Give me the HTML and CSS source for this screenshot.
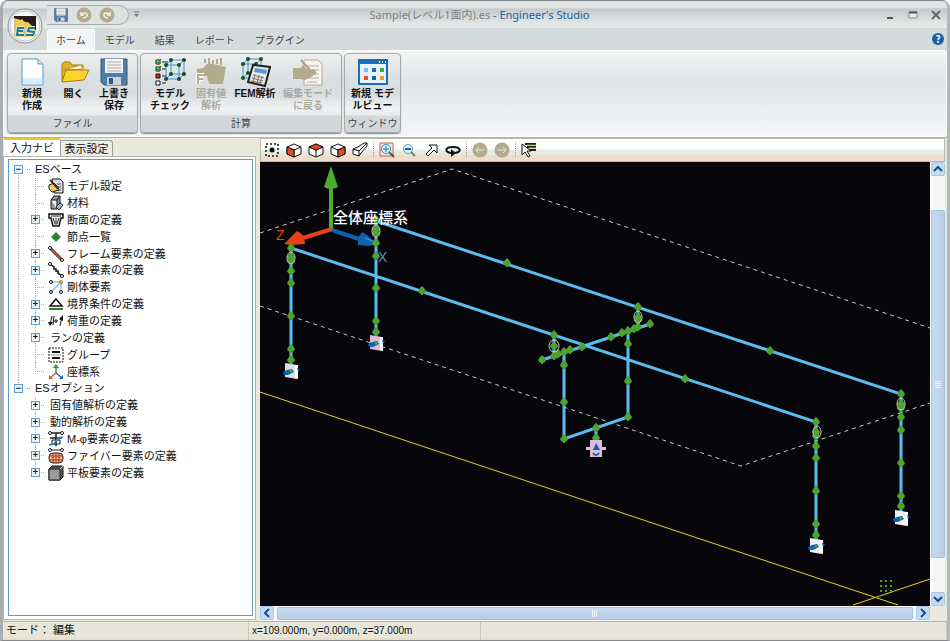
FILE: index.html
```html
<!DOCTYPE html>
<html lang="ja">
<head>
<meta charset="utf-8">
<title>Engineer's Studio</title>
<link rel="stylesheet" href="styles.css">
</head>
<body>
<div class="window">
  <header class="top">
    <button class="orb" aria-label="メニュー"><svg width="36" height="36" viewBox="0 0 36 36"><circle cx="18" cy="18" r="17" fill="#e9ebec" stroke="#8d9294"/><circle cx="18" cy="18" r="15" fill="#f8f8f8" stroke="#c5c9cb"/><path d="M7 8h22v21H7z" fill="#261b1a"/><path d="M7 10c5 2 14 2 22 13v6H7z" fill="#d5c093"/><path d="M9 11l4 2 2-2 3 4 3-1 6 6-7-2-7 2-4-3z" fill="#f0cf48"/><g fill="none" stroke="#f4e68c" stroke-width="4"><path d="M17 20h-6l-1 7h7M11 23h5M28 20h-6l-1 3 6 1-1 3h-7"/></g><g fill="none" stroke="#1777b4" stroke-width="2"><path d="M17 20h-6l-1 7h7M11 23h5M28 20h-6l-1 3 6 1-1 3h-7"/></g></svg></button>
    <div class="titlebar">
      <div class="quick">
        <button aria-label="保存"><svg width="16" height="16" viewBox="0 0 32 32"><use href="#disk"/></svg></button>
        <button aria-label="元に戻す"><svg width="16" height="16"><circle cx="8" cy="8" r="7.500" fill="#b3ab8e"/><path d="M5 5v3h3M5 8c4-4 7-1 6 1s-3 2-4 2" fill="none" stroke="#f4f2e8" stroke-width="1.500"/></svg></button>
        <button aria-label="やり直す"><svg width="16" height="16"><circle cx="8" cy="8" r="7.500" fill="#b3ab8e"/><path d="M11 5v3H8M11 8c-4-4-7-1-6 1s3 2 4 2" fill="none" stroke="#f4f2e8" stroke-width="1.500"/></svg></button>
      </div>
      <button class="more" aria-label="カスタマイズ"><svg width="7" height="7"><path d="M1 1h5" stroke="#777"/><path d="M1 3h5L3.500 6z" fill="#777"/></svg></button>
      <h1>Sample(レベル1面内).es <span>- Engineer's Studio</span></h1>
      <div class="winbtns">
        <button aria-label="最小化"><svg width="10" height="10"><path d="M2 8h6" stroke="#555" stroke-width="2"/></svg></button>
        <button aria-label="最大化"><svg width="10" height="10"><path d="M1 2h8v6H1z" fill="#eee" stroke="#888"/><path d="M1 2.500h8" stroke="#555" stroke-width="2"/></svg></button>
        <button aria-label="閉じる"><svg width="10" height="10"><path d="M1 1l8 8M9 1L1 9" stroke="#666" stroke-width="2"/></svg></button>
      </div>
    </div>
    <nav class="tabs">
      <button class="on">ホーム</button><button>モデル</button><button>結果</button><button>レポート</button><button>プラグイン</button>
      <button class="help" aria-label="ヘルプ">?</button>
    </nav>
  </header>

  <section class="ribbon">
    <div class="group file">
      <div class="cmds">
        <button><svg width="32" height="32"><path d="M6 3h16l5 5v21H6z" fill="#fff" stroke="#4c9bd0"/><path d="M7 22h19v6H7z" fill="#d8edfa"/><path d="M22 3v5h5" fill="#cfe5f5" stroke="#4c9bd0"/></svg>新規<br>作成</button>
        <button><svg width="32" height="32"><path d="M4 25V8l2-2h6l2 3h11v4" fill="#e2b12a" stroke="#a77a10"/><path d="M5 14l18-5 2 4z" fill="#fffbe6" stroke="#b99c35"/><path d="M4 26l4-12h23l-5 10z" fill="#ffd42a" stroke="#a77a10"/></svg>開く</button>
        <button><svg width="32" height="32"><use href="#disk"/></svg>上書き<br>保存</button>
      </div>
      <h2>ファイル</h2>
    </div>
    <div class="group calc">
      <div class="cmds">
        <button><svg width="32" height="32"><g fill="#fff" stroke="#111"><path d="M2 4h4v4H2zM2 11h4v4H2zM2 25h4v4H2z"/><path d="M2 18h4v4H2z" fill="#e0301a"/></g><path d="M2 5l2 2 3-4M2 12l2 2 3-4" stroke="#2c9135" fill="none" stroke-width="1.500"/><path d="M8 6h6M8 13h4M8 20h5M8 27h4" stroke="#222"/><use href="#cube"/></svg>モデル<br>チェック</button>
        <button disabled><svg width="32" height="32"><path d="M2 13l6-1 4-4h6l13 3-3 17H14l-2-8H2z" fill="#b3ab8e"/><path d="M10 7V3M14 8V2M18 8V4M22 8V3M26 9V2" stroke="#b3ab8e" stroke-width="2"/><path d="M3 28v-9h6M3 23h5" stroke="#fff" stroke-width="4" fill="none"/><path d="M3 28v-9h6M3 23h5" stroke="#b3ab8e" stroke-width="2" fill="none"/></svg>固有値<br>解析</button>
        <button><svg width="32" height="32"><use href="#cube" x="-8" y="-1"/><path d="M14 9l17 2-5 19-17-4z" fill="#e8e8e8" stroke="#222" stroke-width="2"/><path d="M16 12l12 2-1 4-12-2z" fill="#5b99d4"/><path d="M14 19l11 3M13 22l11 3M12 25l11 2M16 18l-2 8M20 19l-2 8M23 20l-2 8" stroke="#777" stroke-width="1"/></svg>FEM解析</button>
        <button disabled><svg width="32" height="32"><path d="M12 4h14l4 4v21H12z" fill="#f7f6f0" stroke="#b3ab8e"/><path d="M15 10h12M15 14h12M15 18h12M15 22h12M15 26h10" stroke="#b3ab8e"/><path d="M1 12h8l2-3 5 5 6-1 3 4-6 4-6 3-4-1H1z" fill="#b3ab8e"/><path d="M9 4l9 10" stroke="#aaa285" stroke-width="2"/></svg>編集モード<br>に戻る</button>
      </div>
      <h2>計算</h2>
    </div>
    <div class="group view">
      <div class="cmds">
        <button><svg width="32" height="32"><path d="M2 4h28v24H2z" fill="#e7f3fc" stroke="#176eb8" stroke-width="2"/><path d="M2 4h28v4H2z" fill="#176eb8"/><path d="M22 6h1M25 6h1M28 6h1" stroke="#fff" stroke-width="2"/><path d="M7 12h4v4H7z" fill="#7bb9e8"/><path d="M15 12h4v4h-4z" fill="#1974b8"/><path d="M23 12h4v4h-4z" fill="#55a535"/><path d="M7 20h4v4H7z" fill="#e4502b"/><path d="M15 20h4v4h-4z" fill="#185f9c"/><path d="M23 20h4v4h-4z" fill="#e7a130"/></svg>新規 モデ<br>ルビュー</button>
      </div>
      <h2>ウィンドウ</h2>
    </div>
  </section>

  <main>
    <aside>
      <div class="sidetabs"><button class="on">入力ナビ</button><button>表示設定</button></div>
      <div class="panel"><div class="treebox">
        <ul class="tree">
          <li><span class="rail first"><button aria-label="閉じる">−</button></span><span class="stub"></span>ESベース</li>
          <li><span class="rail"></span><span class="branch"></span><svg class="ic" viewBox="0 0 16 16"><path d="M4 1h8l3 3v11H6z" fill="#ddd" stroke="#111"/><path d="M9 6h4M9 9h4M9 12h4" stroke="#555"/><path d="M1 7l5-2 4 4 1 3-7 2-3-3z" fill="#f0c860" stroke="#222"/><path d="M2 2l8 9" stroke="#222" stroke-width="1.500"/></svg>モデル設定</li>
          <li><span class="rail"></span><span class="branch"></span><svg class="ic" viewBox="0 0 16 16"><path d="M3 5l3-4h6v8l-3 5H3z" fill="#999" stroke="#111"/><path d="M3 5h6v9M9 5l3-4" fill="#eee" stroke="#111"/><path d="M8 12l4-4 3 2-4 5z" fill="#93bae2" stroke="#222"/></svg>材料</li>
          <li><span class="rail"></span><span class="branch"><button aria-label="開く">+</button></span><svg class="ic" viewBox="0 0 16 16"><path d="M1 2h14v4h-2l-2 8H5L3 6H1z" fill="#fff" stroke="#111" stroke-width="1.500"/><path d="M3 4h10M5 6l2 6h2l2-6M8 6v5" stroke="#222" fill="none"/></svg>断面の定義</li>
          <li><span class="rail"></span><span class="branch"></span><svg class="ic" viewBox="0 0 16 16"><path d="M8 3l5 5-5 5-5-5z" fill="#35812f"/></svg>節点一覧</li>
          <li><span class="rail"></span><span class="branch"><button aria-label="開く">+</button></span><svg class="ic" viewBox="0 0 16 16"><path d="M2 2l12 12" stroke="#222" stroke-width="3"/><path d="M3 3l10 10" stroke="#e55a2b" stroke-width="1.500"/><circle cx="2" cy="2" r="1.500" fill="#fff" stroke="#111"/><circle cx="14" cy="14" r="1.500" fill="#fff" stroke="#111"/></svg>フレーム要素の定義</li>
          <li><span class="rail"></span><span class="branch"><button aria-label="開く">+</button></span><svg class="ic" viewBox="0 0 16 16"><path d="M2 2l4 3 0 2 2 0 0 2 2 0 0 2 4 3" stroke="#111" stroke-width="1.500" fill="none"/><circle cx="2" cy="2" r="1.500" fill="#fff" stroke="#111"/><circle cx="14" cy="14" r="1.500" fill="#fff" stroke="#111"/></svg>ばね要素の定義</li>
          <li><span class="rail"></span><span class="branch"></span><svg class="ic" viewBox="0 0 16 16"><path d="M3 13L13 3M13 3H3M13 3v10" stroke="#8fc3ee" stroke-width="1.500"/><g fill="#fff" stroke="#111"><circle cx="3" cy="3" r="1.500"/><circle cx="3" cy="13" r="1.500"/><circle cx="13" cy="13" r="1.500"/></g><circle cx="13" cy="3" r="1.500" fill="#f2c72c" stroke="#a58213"/></svg>剛体要素</li>
          <li><span class="rail"></span><span class="branch"><button aria-label="開く">+</button></span><svg class="ic" viewBox="0 0 16 16"><path d="M8 3l6 7H2z" fill="#fff" stroke="#111" stroke-width="1.500"/><path d="M1 13h14" stroke="#327a30" stroke-width="2"/></svg>境界条件の定義</li>
          <li><span class="rail"></span><span class="branch"><button aria-label="開く">+</button></span><svg class="ic" viewBox="0 0 16 16"><path d="M4 3L2 12M12 13l2-9M6 8h4M8 6v4M6 3L5 12" stroke="#111"/><path d="M0 9l2 4 3-4zM11 6l4-4v6z" fill="#111"/></svg>荷重の定義</li>
          <li><span class="rail"></span><span class="branch"><button aria-label="開く">+</button></span>ランの定義</li>
          <li><span class="rail"></span><span class="branch"></span><svg class="ic" viewBox="0 0 16 16"><path d="M1 1h14v14H1z" fill="none" stroke="#111" stroke-dasharray="2 1"/><path d="M4 5h8M4 11h8" stroke="#111" stroke-width="2"/><path d="M3 8h10" stroke="#888"/></svg>グループ</li>
          <li><span class="rail"></span><span class="branch last"></span><svg class="ic" viewBox="0 0 16 16"><path d="M8 9V2" stroke="#379533" stroke-width="1.500"/><path d="M5 4l3-4 3 4z" fill="#379533"/><path d="M8 9l-5 4" stroke="#e34a22" stroke-width="1.500"/><path d="M1 11v4h4z" fill="#e34a22"/><path d="M8 9l5 4" stroke="#1d69ac" stroke-width="1.500"/><path d="M15 11v4h-4z" fill="#1d69ac"/></svg>座標系</li>
          <li><span class="rail last"><button aria-label="閉じる">−</button></span><span class="stub"></span>ESオプション</li>
          <li><span class="blank"></span><span class="branch"><button aria-label="開く">+</button></span>固有値解析の定義</li>
          <li><span class="blank"></span><span class="branch"><button aria-label="開く">+</button></span>動的解析の定義</li>
          <li><span class="blank"></span><span class="branch"><button aria-label="開く">+</button></span><svg class="ic" viewBox="0 0 16 16"><path d="M2 2h12M2 7h12M8 2v13" stroke="#222" stroke-width="1.500"/><path d="M4 9h8v4H4z" fill="none" stroke="#222"/><path d="M1 14l5-1 4-6 5-1" stroke="#2a7fca" stroke-width="1.500" fill="none"/><circle cx="2" cy="2" r="1.500" fill="#fff" stroke="#222"/><circle cx="14" cy="2" r="1.500" fill="#fff" stroke="#222"/></svg>M-φ要素の定義</li>
          <li><span class="blank"></span><span class="branch"><button aria-label="開く">+</button></span><svg class="ic" viewBox="0 0 16 16"><path d="M2 2h12" stroke="#222"/><circle cx="2" cy="2" r="1.500" fill="#fff" stroke="#222"/><circle cx="14" cy="2" r="1.500" fill="#fff" stroke="#222"/><rect x="1" y="5" width="14" height="10" rx="4" fill="#f3b08f" stroke="#222"/><path d="M5 5v10M8 5v10M11 5v10M1 8h14M1 12h14" stroke="#9b3e20"/></svg>ファイバー要素の定義</li>
          <li><span class="blank"></span><span class="branch last"><button aria-label="開く">+</button></span><svg class="ic" viewBox="0 0 16 16"><path d="M1 4l3-3h11v11l-3 3H1z" fill="#555" stroke="#111"/><path d="M1 4h11v11H1z" fill="#999" stroke="#222"/><path d="M12 4l3-3" stroke="#ccc"/></svg>平板要素の定義</li>
        </ul>
      </div></div>
    </aside>

    <section class="model">
      <div class="tools">
        <button aria-label="全体表示"><svg viewBox="0 0 16 16"><path d="M2 2h12v12H2z" fill="none" stroke="#111" stroke-width="1.500" stroke-dasharray="2 2"/><circle cx="8" cy="8" r="2.500"/></svg></button>
        <button aria-label="正面"><svg viewBox="0 0 16 16"><use href="#box"/><path d="M1 5l7 3v7l-7-3z" fill="#e84a22" stroke="#111"/></svg></button>
        <button aria-label="上面"><svg viewBox="0 0 16 16"><use href="#box"/><path d="M1 5l7-3 7 3-7 3z" fill="#e84a22" stroke="#111"/></svg></button>
        <button aria-label="側面"><svg viewBox="0 0 16 16"><use href="#box"/><path d="M15 5L8 8v7l7-3z" fill="#e84a22" stroke="#111"/></svg></button>
        <button aria-label="透視"><svg viewBox="0 0 16 16"><path d="M1 7l5-2 6-4h3v3l-6 7-2 3-6-2zM1 7l6 2 8-8M7 9v5" fill="#fff" stroke="#111"/></svg></button>
        <i></i>
        <button aria-label="範囲拡大"><svg viewBox="0 0 16 16"><path d="M1 1h13v13H1z" fill="#d9ebf8" stroke="#e4572c"/><path d="M10 10l5 5" stroke="#555" stroke-width="2"/><circle cx="7" cy="7" r="4.500" fill="#d9effd" stroke="#5087b5"/><path d="M4 7h6M7 4v6" stroke="#2675b0"/></svg></button>
        <button aria-label="縮小"><svg viewBox="0 0 16 16"><path d="M10 10l4 4" stroke="#777" stroke-width="2"/><circle cx="7" cy="7" r="4.500" fill="#d9effd" stroke="#6b98bf"/><path d="M4 7h6" stroke="#1a66aa" stroke-width="2"/></svg></button>
        <button aria-label="移動"><svg viewBox="0 0 16 16"><path d="M3 12l6-6-3-3h8v8l-3-3-6 6z" fill="#fff" stroke="#111"/></svg></button>
        <button aria-label="回転"><svg viewBox="0 0 16 16"><path d="M10 11c7-1 6-6-2-6s-9 5-2 6" fill="none" stroke="#111" stroke-width="2"/><path d="M6 7v8l5-4z" fill="#111"/></svg></button>
        <i></i>
        <button aria-label="戻る"><svg viewBox="0 0 16 16"><circle cx="8" cy="8" r="7.500" fill="#b3ab8e"/><path d="M12 8H5M7 5L4 8l3 3" stroke="#eeeada" fill="none"/></svg></button>
        <button aria-label="進む"><svg viewBox="0 0 16 16"><circle cx="8" cy="8" r="7.500" fill="#b3ab8e"/><path d="M4 8h7M9 5l3 3-3 3" stroke="#eeeada" fill="none"/></svg></button>
        <i></i>
        <button aria-label="選択"><svg viewBox="0 0 16 16"><path d="M4 2h11M6 5h9M8 8h7" stroke="#222" stroke-width="2"/><path d="M6 3h9" stroke="#5a9c34"/><path d="M8 6h7" stroke="#e6a32b"/><path d="M1 2v11l3-3 3 5 2-1-3-5h4z" fill="#fff" stroke="#111"/></svg></button>
      </div>
      <div class="canvas">
        <svg viewBox="260 162 670 443" preserveAspectRatio="xMinYMin meet" role="img" aria-label="モデル">
          <g fill="none" stroke="#c9c9c9" stroke-dasharray="4 4"><path d="M260 233L452 169 930 328M260 306L741 466 930 403"/></g>
          <path d="M260 392L898 605M853 605L930 579" stroke="#e6d22e" fill="none"/>
          <g stroke="#5abdee" stroke-width="3" fill="none">
            <path d="M291 248L816 422V540M376 221L901 394V512M291 248V366M376 221V337M564 352V439L628 417V331M542 360L650 324M554 334V356M638 307V327M596 428V440"/>
          </g>
          <path d="M331 230V186" stroke="#4daa32" stroke-width="4"/><path d="M331 166l7 21q-7 4-14 0z" fill="#4daa32"/>
          <path d="M332 229L303 238" stroke="#e84118" stroke-width="4"/><path d="M284 244l13-13q8 3 8 13l-14 1z" fill="#e84118"/>
          <path d="M332 230L362 240" stroke="#0f63ad" stroke-width="4"/><path d="M378 244l-15-12q-6 3-5 13l10 1z" fill="#0f63ad"/><path d="M365 238l12 5" stroke="#5e9ed2"/>
          <g fill="#4ca332">
            <use href="#n" x="291" y="248"/><use href="#n" x="291" y="257"/><use href="#n" x="291" y="261"/><use href="#n" x="291" y="271"/><use href="#n" x="291" y="283"/><use href="#n" x="291" y="316"/><use href="#n" x="291" y="349"/><use href="#n" x="291" y="360"/>
            <use href="#n" x="376" y="220"/><use href="#n" x="376" y="229"/><use href="#n" x="376" y="233"/><use href="#n" x="376" y="243"/><use href="#n" x="376" y="256"/><use href="#n" x="376" y="288"/><use href="#n" x="376" y="321"/><use href="#n" x="376" y="332"/>
            <use href="#n" x="507" y="263"/><use href="#n" x="638" y="307"/><use href="#n" x="770" y="351"/><use href="#n" x="422" y="291"/><use href="#n" x="554" y="335"/><use href="#n" x="685" y="379"/>
            <use href="#n" x="816" y="422"/><use href="#n" x="816" y="432"/><use href="#n" x="816" y="436"/><use href="#n" x="816" y="446"/><use href="#n" x="816" y="458"/><use href="#n" x="816" y="491"/><use href="#n" x="816" y="524"/><use href="#n" x="816" y="535"/>
            <use href="#n" x="901" y="394"/><use href="#n" x="901" y="404"/><use href="#n" x="901" y="408"/><use href="#n" x="901" y="417"/><use href="#n" x="901" y="430"/><use href="#n" x="901" y="463"/><use href="#n" x="901" y="496"/><use href="#n" x="901" y="506"/>
            <use href="#n" x="564" y="352"/><use href="#n" x="564" y="365"/><use href="#n" x="564" y="402"/><use href="#n" x="564" y="439"/><use href="#n" x="628" y="331"/><use href="#n" x="628" y="344"/><use href="#n" x="628" y="381"/><use href="#n" x="628" y="417"/><use href="#n" x="596" y="428"/><use href="#n" x="596" y="438"/>
            <use href="#n" x="542" y="360"/><use href="#n" x="554" y="356"/><use href="#n" x="558" y="354"/><use href="#n" x="570" y="350"/><use href="#n" x="582" y="347"/><use href="#n" x="611" y="337"/><use href="#n" x="622" y="333"/><use href="#n" x="634" y="329"/><use href="#n" x="638" y="327"/><use href="#n" x="650" y="324"/><use href="#n" x="554" y="346"/><use href="#n" x="638" y="317"/><use href="#n" x="638" y="320"/>
          </g>
          <g fill="none" stroke="#c8c8c8"><ellipse cx="291" cy="258" rx="4" ry="6"/><ellipse cx="376" cy="231" rx="4" ry="6"/><ellipse cx="554" cy="346" rx="5" ry="6"/><ellipse cx="638" cy="317" rx="4" ry="6"/><ellipse cx="817" cy="432" rx="4" ry="6"/><ellipse cx="901" cy="404" rx="4" ry="6"/></g>
          <use href="#support" x="291" y="371" fill="#dcdde3"/><use href="#support" x="376" y="343" fill="#dfb9d8"/><use href="#support" x="816" y="546" fill="#f0eef2"/><use href="#support" x="901" y="518" fill="#f0eef2"/>
          <path d="M590 440h12v7h4v3h-4v7h-12v-7h-4v-3h4z" fill="#dfb9d8"/><path d="M596 443l4 7h-7z" fill="#0f63ad"/><path d="M593 453q3 4 6 0" fill="none" stroke="#0f63ad" stroke-width="2"/>
          <g stroke="#4ca332" stroke-width="2" stroke-dasharray="2 3"><path d="M880 581h12M880 586h12M880 591h12"/></g>
          <text x="333" y="223" class="axis-name">全体座標系</text><text x="276" y="240" class="axis z">Z</text><text x="378" y="262" class="axis x">X</text>
        </svg>
      </div>
      <div class="vbar"><button aria-label="上へ"><svg viewBox="0 0 10 10"><path d="M1 7l4-4 4 4"/></svg></button><div class="track"><div class="thumb"><b></b></div></div><button aria-label="下へ"><svg viewBox="0 0 10 10"><path d="M1 3l4 4 4-4"/></svg></button></div>
      <div class="hbar"><button aria-label="左へ"><svg viewBox="0 0 10 10"><path d="M7 1L3 5l4 4"/></svg></button><div class="track"><div class="thumb"><b></b></div></div><button aria-label="右へ"><svg viewBox="0 0 10 10"><path d="M3 1l4 4-4 4"/></svg></button></div>
    </section>
  </main>

  <footer><span class="mode">モード： 編集</span><span class="pos">x=109.000m, y=0.000m, z=37.000m</span><span></span></footer>
</div>
<svg class="defs" width="0" height="0">
  <defs>
    <g id="disk"><path d="M3 3h26v26H6l-3-3z" fill="#4f7da6" stroke="#34597c"/><path d="M7 3h18v14H7z" fill="#f4f4f4"/><path d="M9 6h14M9 9h14M9 12h14M9 15h14" stroke="#a8a8a8"/><path d="M9 21h14v8H9z" fill="#ccd2d8"/><path d="M11 22h4v6h-4z" fill="#34597c"/></g>
    <g id="cube"><path d="M12 9h13v14H12zM12 9l5-5h13v14l-5 5M25 9l5-5M17 4v14h13M17 18l-5 5" fill="none" stroke="#3f96d8"/><g fill="#17501c"><circle cx="12" cy="9" r="2"/><circle cx="25" cy="9" r="2"/><circle cx="12" cy="23" r="2"/><circle cx="25" cy="23" r="2"/><circle cx="17" cy="4" r="2"/><circle cx="30" cy="4" r="2"/><circle cx="17" cy="18" r="2"/><circle cx="30" cy="18" r="2"/></g></g>
    <g id="box"><path d="M1 5l7-3 7 3v7l-7 3-7-3zM1 5l7 3 7-3M8 8v7" fill="#fff" stroke="#111"/></g>
    <path id="n" d="M0-5L2-3 4 0 3 2 1 3V4H-1V3L-3 2-4 0-2-3z"/>
    <g id="support"><path d="M-6-8l12 2V8L-6 6z"/><path d="M4-6l3 0V8l-3-1z" fill="#fff"/><path d="M-8 1l4-2 5-1 2 3-6 3h-4z" fill="#0f63ad"/><path d="M6-3l3 1-2 3z" fill="#0f63ad"/><circle cx="0" cy="0" r="1.500" fill="#4ca332"/></g>
  </defs>
</svg>
</body>
</html>
```
FILE: styles.css
```css
* { box-sizing: border-box; }
body { margin: 0; font: 11px/16px "Liberation Sans", "Noto Sans CJK JP", sans-serif; color: #111; }
button { border: 0; padding: 0; background: none; font: inherit; color: inherit; }
h1, h2 { margin: 0; font-size: 11px; font-weight: 400; }
svg { display: block; }
.defs { position: absolute; }

.window { min-height: 100vh; display: flex; flex-direction: column; background: #e9e9dc; border: 1px solid #85898b; border-left: 3px solid #a9adaf; border-right: 3px solid #b2b8ba; border-radius: 8px 8px 0 0; }
.top { position: relative; background: #d5dada; border-radius: 8px 8px 0 0; }
.titlebar { display: flex; align-items: center; height: 27px; padding: 0 6px 0 44px; background: linear-gradient(#e2e5e5 0 24%, #c6caca 30%, #d0d4d4 50%, #e6e9e9 90%); border-radius: 8px 8px 0 0; }
.orb { position: absolute; left: 4px; top: 7px; z-index: 1; }
.quick { display: flex; align-items: center; gap: 7px; height: 20px; width: 82px; padding-left: 6px; border: 1px solid #a8adaf; border-left: 0; border-radius: 0 10px 10px 0; background: #dde1e1; }
.more { margin-left: 4px; }
h1 { flex: 1; text-align: center; color: #7d8183; padding-right: 66px; font-family: "Noto Sans", "Noto Sans CJK JP", sans-serif; }
h1 span { color: #1c62a6; }
.winbtns { display: flex; gap: 13px; }

.tabs { display: flex; align-items: flex-end; height: 22px; padding: 0 3px 0 44px; font-size: 10px; font-family: "Noto Sans CJK JP", sans-serif; color: #444; }
.tabs button { height: 21px; padding: 0 10px; }
.tabs .on { padding: 0 8px; background: #f3f4f5; border: 1px solid #fff; border-bottom: 0; border-radius: 3px 3px 0 0; }
.tabs .help { align-self: center; width: 12px; height: 12px; margin: 0 0 0 auto; padding: 0; border-radius: 50%; background: #1560a8; color: #fff; font-weight: 700; line-height: 12px; }

.ribbon { display: flex; gap: 2px; padding: 2px 3px 3px; border: 1px solid #fff; border-radius: 4px; background: linear-gradient(#f3f4f5, #e0e5e7 35%, #f4f6f7); }
.group { border: 1px solid #a5aaac; border-radius: 4px; box-shadow: 0 1px 1px #888d90; background: linear-gradient(#eceeef, #dde0e2 30%, #d8dcde 50%, #f0f1f2 70%, #e8eaeb 78%, #d3d7d9 80%, #d3d7d9); }
.cmds { display: grid; height: 62px; padding-top: 2px; font-weight: 700; font-size: 10px; line-height: 12px; }
.cmds button { align-self: start; white-space: nowrap; }
.cmds svg { margin: 0 auto; }
.cmds button:disabled { color: #aaa9a0; }
.file .cmds { grid-template-columns: 42px 41px 40px; padding-left: 3px; padding-right: 3px; }
.calc .cmds { grid-template-columns: 44px 38px 50px 56px; padding-left: 7px; padding-right: 5px; }
.view .cmds { grid-template-columns: 55px; }
.group h2 { text-align: center; font-size: 10px; line-height: 16px; color: #444; }

main { flex: 1; min-height: 0; display: grid; grid-template-columns: 253px minmax(0, 1fr); gap: 4px; border-top: 1px solid #b0b5b5; padding-right: 2px; }
aside { display: flex; flex-direction: column; padding-bottom: 1px; }
.sidetabs { display: flex; align-items: flex-end; height: 18px; padding-left: 1px; }
.sidetabs button { height: 16px; width: 53px; border: 1px solid #999d9a; border-bottom: 0; background: #eceee6; border-radius: 0 3px 0 0; line-height: 14px; }
.sidetabs .on { height: 18px; width: 56px; background: #fff; border-width: 0; border-top: 2px solid #f0c42a; border-radius: 0; }
.panel { flex: 1; display: flex; padding: 2px 2px 3px 4px; border: 1px solid #b7b7ae; background: #fff; }
.treebox { flex: 1; padding-top: 1px; border: 1px solid #5f9dc9; }
.tree { list-style: none; margin: 0; padding-left: 1px; display: grid; grid-template-rows: repeat(19, minmax(0, 1fr)); height: 320px; }
.tree li { display: flex; align-items: center; }
.tree button { width: 9px; height: 9px; border: 1px solid #5d9fd0; background: #eaf5fc; line-height: 7px; font-size: 9px; font-weight: 700; }
.ic { width: 16px; height: 16px; margin: 0 3px 0 -2px; }
.rail, .branch, .blank, .stub { display: flex; align-items: center; align-self: stretch; width: 17px; padding-left: 4px; }
.stub { width: 8px; background: repeating-linear-gradient(90deg, #999 0 1px, transparent 1px 2px) 0 50% / 3px 1px no-repeat; }
.rail { background: repeating-linear-gradient(#aaa 0 1px, transparent 1px 2px) 8px 0 / 1px 100% no-repeat; }
.rail.first { background-position: 8px 8px; }
.rail.last { background-size: 1px 8px; }
.branch { width: 20px; margin-right: 3px; background: repeating-linear-gradient(#aaa 0 1px, transparent 1px 2px) 8px 0 / 1px 100% no-repeat, repeating-linear-gradient(90deg, #aaa 0 1px, transparent 1px 2px) 8px 50% / 10px 1px no-repeat; }
.branch.last { background-size: 1px 50%, 10px 1px; }

.model { display: grid; grid-template: 24px minmax(0, 1fr) 15px / minmax(0, 1fr) 15px; }
.tools { grid-column: 1 / 3; display: flex; align-items: center; border: 1px solid #b9baa9; background: linear-gradient(#fff 0 40%, #e8e9de 55% 72%, #efdccd 75%); }
.tools button { width: 22px; }
.tools svg { width: 16px; height: 16px; margin: 0 auto; }
.tools i { width: 1px; height: 16px; margin: 0 2px; background: repeating-linear-gradient(#a99b91 0 1px, transparent 1px 2px); }
.canvas { background: #07060a; overflow: hidden; }
.canvas svg { width: 100%; height: 100%; }
.axis-name { fill: #fff; font: 500 15px "Noto Sans CJK JP", sans-serif; }
.axis { font: 14px "Liberation Sans", sans-serif; }
.z { fill: #e84118; }
.x { fill: #4f95d3; }
.vbar, .hbar { display: flex; background: #f5f7f6; }
.vbar { flex-direction: column; border-left: 1px solid #fff; }
.hbar { grid-column: 1; }
.vbar button, .hbar button { width: 14px; height: 14px; border: 1px solid #a9c9e6; border-radius: 2px; background: #c5daf2; }
.vbar button svg, .hbar button svg { width: 10px; height: 10px; margin: 0 auto; fill: none; stroke: #0f4f93; stroke-width: 2; }
.track { flex: 1; display: flex; padding: 1px 3px; }
.vbar .track { flex-direction: column; padding: 34px 0; }
.thumb { flex: 1; display: flex; align-items: center; justify-content: center; border: 1px solid #9ec4e6; border-radius: 2px; background: linear-gradient(90deg, #c4dcf3, #bccae6); }
.hbar .thumb { background: linear-gradient(#c4dcf3, #bccae6); }
.thumb b { width: 6px; height: 7px; background: repeating-linear-gradient(#eef5fc 0 1px, transparent 1px 2px); }
.hbar b { background: repeating-linear-gradient(90deg, #eef5fc 0 1px, transparent 1px 2px); }

footer { display: grid; grid-template-columns: 246px 232px 1fr; height: 19px; border-top: 1px solid #b5b6aa; background: linear-gradient(#e6e7da 80%, #eed9c8); line-height: 17px; }
footer span { padding-left: 3px; border-right: 1px solid #c9c9bd; }
.pos { font-size: 10px; }
```
